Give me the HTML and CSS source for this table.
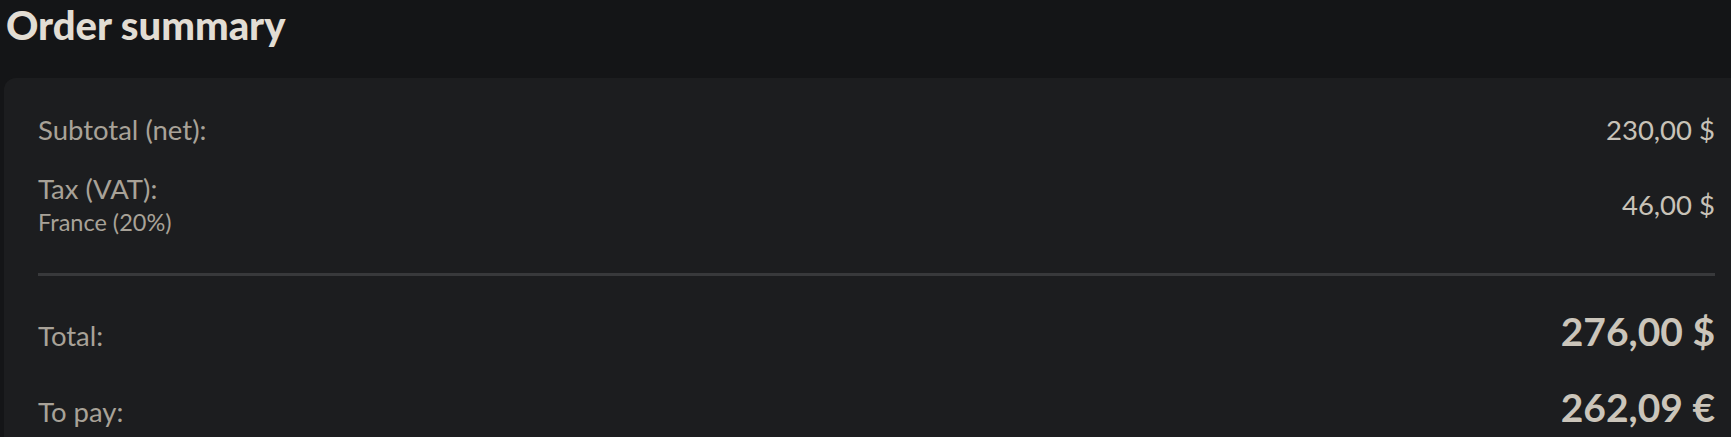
FILE: index.html
```html
<!DOCTYPE html>
<html lang="en">
<head>
<meta charset="utf-8">
<title>Order summary</title>
<link rel="stylesheet" href="styles.css">
</head>
<body>
<main class="page">
  <h1 class="title">Order summary</h1>
  <section class="card">
    <div class="row">
      <div class="label">Subtotal (net):</div>
      <div class="value">230,00 $</div>
    </div>
    <div class="row row-tax">
      <div class="label-block">
        <div class="label">Tax (VAT):</div>
        <div class="sublabel">France (20%)</div>
      </div>
      <div class="value value-tax">46,00 $</div>
    </div>
    <hr class="divider">
    <div class="row row-total">
      <div class="label">Total:</div>
      <div class="value-big">276,00 $</div>
    </div>
    <div class="row row-total row-pay">
      <div class="label">To pay:</div>
      <div class="value-big">262,09 €</div>
    </div>
  </section>
</main>
</body>
</html>
```
FILE: styles.css
```css
html, body {
  margin: 0;
  padding: 0;
  background: #141517;
  overflow: hidden;
}
body {
  font-family: Lato, "Open Sans", sans-serif;
  color: #c8c2b8;
}
.page {
  padding: 0 0 0 4px;
}
.title {
  margin: 0;
  padding: 1px 0 0 2px;
  font-size: 40px;
  line-height: 48px;
  font-weight: 900;
  color: #e2ddd4;
  height: 78px;
  box-sizing: border-box;
}
.card {
  background: #1c1d1f;
  border-radius: 12px;
  margin-right: -16px;
  padding: 35px 32px 40px 34px;
}
.row {
  display: flex;
  justify-content: space-between;
  align-items: center;
}
.label {
  font-size: 27.5px;
  line-height: 34px;
  color: #a8a298;
}
.value {
  font-size: 27.5px;
  line-height: 34px;
  color: #c8c2b8;
}
.value-tax {
  padding-bottom: 1px;
}
.row-tax {
  margin-top: 25px;
}
.sublabel {
  font-size: 23.5px;
  line-height: 32px;
  color: #a8a298;
}
.divider {
  border: 0;
  height: 3px;
  background: #38393b;
  margin: 35px 0 0 0;
}
.row-total {
  align-items: baseline;
  margin-top: 33px;
}
.row-pay {
  margin-top: 32px;
}
.value-big {
  font-size: 39px;
  line-height: 44px;
  font-weight: 700;
  color: #cbc5ba;
}
```
